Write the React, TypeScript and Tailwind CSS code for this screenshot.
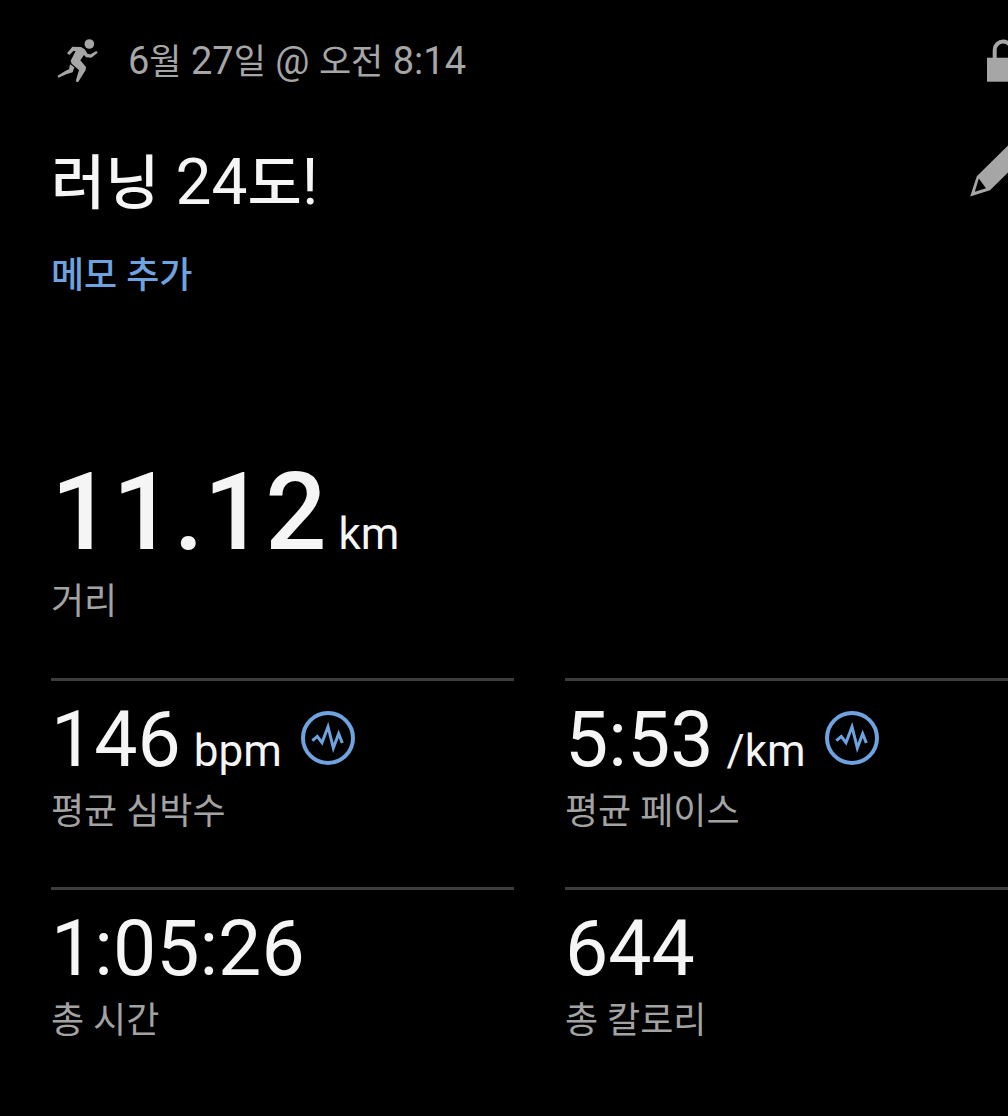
import React from 'react';

interface Metric {
  value: string;
  unit?: string;
  label: string;
  chart?: boolean;
}

const metrics: Metric[] = [
  { value: '146', unit: 'bpm', label: '평균 심박수', chart: true },
  { value: '5:53', unit: '/km', label: '평균 페이스', chart: true },
  { value: '1:05:26', label: '총 시간' },
  { value: '644', label: '총 칼로리' },
];

function RunnerIcon() {
  return (
    <svg viewBox="51 54 126 135" className="h-[45px] w-[42px] shrink-0" fill="currentColor" aria-hidden="true">
      <circle cx="148" cy="69" r="14.5" />
      <path d="M97 77L123 78L134 85L143 99L152 100L169 90L173 95L154 110L138 109L132 102L121 118L138 138L137 147L114 184L107 181L117 147L95 128L92 119L107 90L100 90L88 102L81 97Z" />
      <path d="M90 130L103 139L98 154L81 159L55 170L53 164L77 149L87 145Z" />
    </svg>
  );
}

function UnlockIcon() {
  return (
    <svg viewBox="0 0 32 43" className="h-[43px] w-8" aria-hidden="true">
      <path d="M0 18.7H32V42.7H0Z" fill="currentColor" />
      <path d="M7.7 19V11A8.5 8.5 0 0 1 24.7 11V19" fill="none" stroke="currentColor" strokeWidth="4" />
    </svg>
  );
}

function PencilIcon() {
  return (
    <svg viewBox="0 0 58 58" className="size-[58px]" fill="currentColor" aria-hidden="true">
      <path
        fillRule="evenodd"
        d="M0.2 57.5L6.8 37.3L39 5.5Q42 3 45 5.5L52.5 13Q55 16 52.5 19L20 51.3ZM4.8 52.8L16 49.2L8.8 39.6Z"
      />
    </svg>
  );
}

function PulseIcon() {
  return (
    <svg viewBox="60 126 162 162" className="size-[54px]" fill="none" stroke="currentColor" aria-hidden="true">
      <circle cx="141" cy="207" r="75" strokeWidth="12" />
      <path d="M94 215L109 202L123 221L141 173L157 237L173 194L184 222" strokeWidth="9" strokeMiterlimit="10" />
    </svg>
  );
}

function MetricCell({ metric }: { metric: Metric }) {
  return (
    <div className="h-[209px] border-t-3 border-[#3d3d3d] pt-[13px]">
      <div className="flex items-start">
        <p className="whitespace-nowrap text-[77px] leading-[92px]">
          {metric.value}
          {metric.unit && <span className="ml-[13px] text-[44px] leading-none">{metric.unit}</span>}
        </p>
        {metric.chart && (
          <button type="button" aria-label={`${metric.label} 그래프`} className="mt-[17px] ml-[19px] text-[#6ea3e0]">
            <PulseIcon />
          </button>
        )}
      </div>
      <p className="text-4xl leading-[52px] text-[#a3a3a3]">{metric.label}</p>
    </div>
  );
}

export default function App() {
  return (
    <main className="min-h-screen overflow-hidden bg-black font-[Roboto,'Noto_Sans_CJK_KR',sans-serif] text-[#f5f5f5]">
      {/* content runs slightly past the right edge of the window */}
      <div className="w-[calc(100%+20px)] pt-[39px] pl-[51px]">
        <header className="flex items-start justify-between text-[#a6a6a6]">
          <div className="flex items-center pl-1.5">
            <RunnerIcon />
            <p className="ml-[29px] text-[38px] leading-[45px]">
              6<span className="text-[35px] leading-none">월</span> 27<span className="text-[35px] leading-none">일</span> @{' '}
              <span className="text-[35px] leading-none">오전</span> 8:14
            </p>
          </div>
          <button type="button" aria-label="공개 설정" className="mr-[9px]">
            <UnlockIcon />
          </button>
        </header>

        <div className="mt-[55px] flex items-start justify-between">
          <h1 className="text-[64px] leading-[88px]">
            <span className="text-[59px] leading-none font-medium">러닝</span> 24
            <span className="text-[59px] leading-none font-medium">도</span>!
          </h1>
          <button type="button" aria-label="이름 수정" className="text-[#a6a6a6]">
            <PencilIcon />
          </button>
        </div>

        <button type="button" className="mt-[23px] block text-4xl leading-[52px] font-medium text-[#6ea3e0]">
          메모 추가
        </button>

        <section className="mt-[146px]">
          <p className="text-[108px] leading-[128px] font-medium">
            11.12<span className="ml-3 text-[44px] leading-none font-normal">km</span>
          </p>
          <p className="text-4xl leading-[52px] text-[#a3a3a3]">거리</p>
        </section>

        <section className="mt-[50px] grid grid-cols-2 gap-x-[51px]">
          {metrics.map((metric) => (
            <MetricCell key={metric.label} metric={metric} />
          ))}
        </section>
      </div>
    </main>
  );
}
